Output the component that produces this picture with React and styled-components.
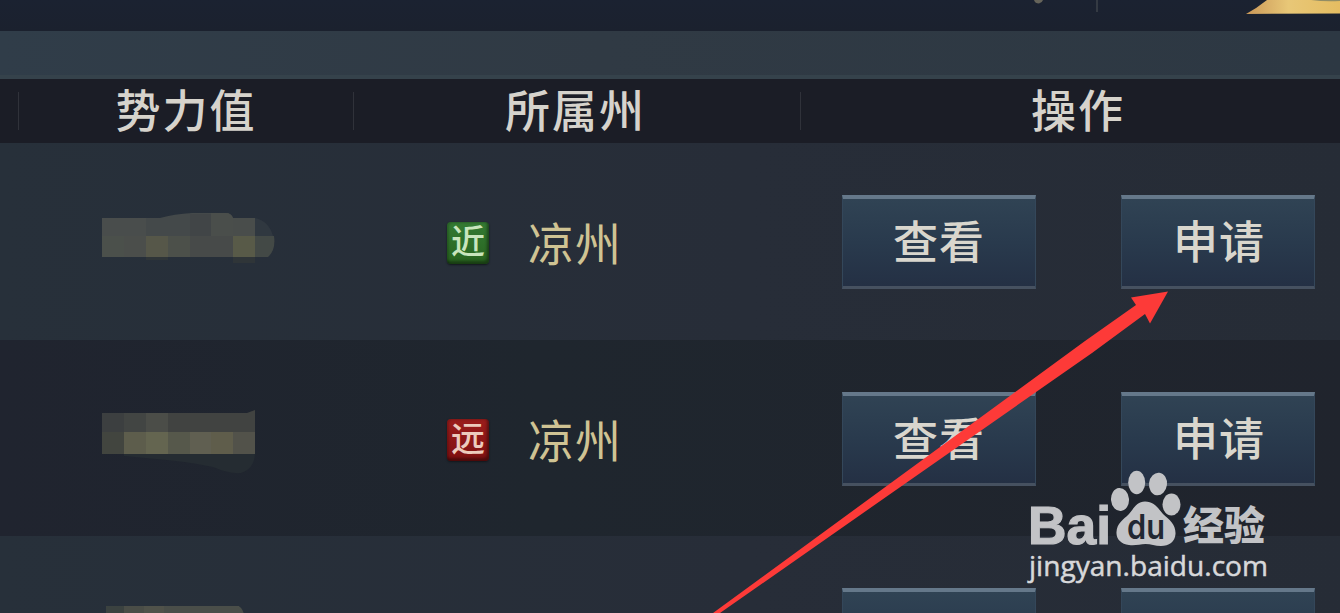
import React from 'react';
import styled, { createGlobalStyle } from 'styled-components';

const rows = [
  { near: true, province: '凉州', mosaic: 'first' },
  { near: false, province: '凉州', mosaic: 'second' },
  { near: false, province: '凉州', mosaic: 'third' },
];

// x, y, width, height, colour
const mosaics = {
  first: [
    [0, 5, 44, 18, '#494d4c'], [0, 23, 22, 21, '#4b504b'], [22, 23, 22, 21, '#4b4e4b'],
    [44, 23, 22, 21, '#565749'], [66, 23, 22, 21, '#4c504a'], [88, 23, 43, 21, '#474a49'],
    [131, 5, 22, 18, '#494d4b'], [131, 23, 22, 21, '#585a48'], [131, 44, 22, 6, '#2f3538'],
    [44, 44, 22, 3, '#2f3538'],
  ],
  second: [
    [0, 2, 22, 19, '#3c3f40'], [22, 2, 22, 19, '#424543'], [44, 2, 22, 19, '#4b4d48'],
    [66, 2, 87, 19, '#414341'], [0, 21, 22, 22, '#42453f'], [22, 21, 22, 22, '#5d5d4c'],
    [44, 21, 22, 22, '#646550'], [66, 21, 22, 22, '#56584b'], [88, 21, 21, 22, '#605f51'],
    [109, 21, 22, 22, '#5f5d4b'], [131, 21, 22, 22, '#52524a'],
  ],
  third: [
    [4, 0, 18, 30, '#3b4240'], [22, 0, 20, 30, '#4a4d47'], [42, 0, 20, 30, '#50524a'],
    [62, 0, 75, 30, '#4a4e49'],
  ],
};

function Mosaic({ kind }) {
  return (
    <MosaicArt viewBox="0 0 175 66">
      {kind === 'first' && (
        <>
          <path d="M44 24V5h14Q72 1 90 0h34q5 0 7 5v18z" fill="#44494a" />
          <path d="M88 1h21v22H88z" fill="#414547" />
          <path d="M109 0h15q5 0 7 5v18h-22z" fill="#4a4e4b" />
          <path d="M153 5q14 3 18 18h-18z" fill="#303840" />
          <path d="M153 23h19q2 14-6 21h-13z" fill="#434946" />
        </>
      )}
      {kind === 'second' && (
        <>
          <path d="M22 43h131q-1 15-14 19-12 1-28-6-28-6-68-9l-21-2z" fill="#252c32" />
          <path d="M145 2l8-3v4z" fill="#414341" />
        </>
      )}
      {kind === 'third' && <path d="M136 0q4 1 6 8h-6z" fill="#4a4e49" />}
      {mosaics[kind].map(([x, y, w, h, fill]) => (
        <rect key={`${x}-${y}`} x={x} y={y} width={w} height={h} fill={fill} />
      ))}
    </MosaicArt>
  );
}

function Row({ near, province, mosaic, dark }) {
  return (
    <TableRow $dark={dark}>
      <PowerCell $kind={mosaic}>
        <Mosaic kind={mosaic} />
      </PowerCell>
      <ProvinceCell>
        <Badge $near={near}>{near ? '近' : '远'}</Badge>
        <Province>{province}</Province>
      </ProvinceCell>
      <ActionCell>
        <Button>查看</Button>
        <Button $nudge>申请</Button>
      </ActionCell>
    </TableRow>
  );
}

function App() {
  return (
    <Screen>
      <GlobalStyle />
      <TopBar>
        <TopArt viewBox="0 0 340 31">
          <defs>
            <linearGradient id="gold" x1="0" x2="1">
              <stop offset="0" stopColor="#c99758" />
              <stop offset="0.45" stopColor="#e8c777" />
              <stop offset="1" stopColor="#e5bd62" />
            </linearGradient>
          </defs>
          <path d="M34 0h9q-1 3-4 3.500-4 0-5-3.500z" fill="#66645a" />
          <path d="M96 0h2v12h-2z" fill="#343a43" />
          <path d="M246 14Q257 8 267 0h73v13.500z" fill="url(#gold)" />
          <path d="M311 0h29v1q-15 1-29-1z" fill="#928d65" />
        </TopArt>
      </TopBar>
      <Strip />
      <HeaderRow>
        <HeaderCell />
        <HeaderCell $line><Title>势力值</Title></HeaderCell>
        <HeaderCell $line><Title $nudge="3px">所属州</Title></HeaderCell>
        <HeaderCell $line><Title>操作</Title></HeaderCell>
      </HeaderRow>
      {rows.map((row, i) => (
        <Row key={row.mosaic} {...row} dark={i % 2 === 1} />
      ))}
      <Arrow viewBox="0 0 1340 613">
        <polygon
          points="1168,291.500 1131,297.500 1136,305 1085,341 713,613 720,613 1092,353 1145,314 1150,323.500"
          fill="#fd3a38"
        />
      </Arrow>
      <Watermark viewBox="0 0 250 120">
        <g fill="#c2c3c6">
          <text x="4" y="79" textLength="83" lengthAdjust="spacingAndGlyphs" className="latin">Bai</text>
          <ellipse cx="96" cy="34.500" rx="9" ry="11.500" transform="rotate(-5 96 34.500)" />
          <ellipse cx="112.700" cy="17.500" rx="8.500" ry="11.700" />
          <ellipse cx="134" cy="19" rx="9" ry="11.300" transform="rotate(7 134 19)" />
          <ellipse cx="147.500" cy="39.500" rx="9" ry="11" />
          <path d="M121 36.500C130 36.500 134 43 139 49C146 55 152 60 151.500 69C151 77 145 81 137 81C131 81 127 79 121.500 79C116 79 111 81 105 80C97 79 92 74 92.500 67C93 58 99 55 105 49C110 43 113 36.500 121 36.500Z" />
          <text x="159" y="75" textLength="82" lengthAdjust="spacingAndGlyphs" className="hans">经验</text>
        </g>
        <text x="103" y="74" textLength="38" lengthAdjust="spacingAndGlyphs" className="du">du</text>
        <text x="5" y="111" textLength="239" lengthAdjust="spacingAndGlyphs" className="site">jingyan.baidu.com</text>
      </Watermark>
    </Screen>
  );
}

export default App;

const GlobalStyle = createGlobalStyle`
    * {
        box-sizing: border-box;
    }
    body {
        margin: 0;
        overflow: hidden;
        background: #20252e;
        font-family: 'Noto Sans CJK SC', sans-serif;
    }
`

const Screen = styled.main`
    position: relative;
    width: 1340px;
    height: 613px;
    overflow: hidden;
`

const TopBar = styled.div`
    display: flex;
    justify-content: flex-end;
    height: 31px;
    background: linear-gradient(#1b2231, #1b212e);
`

const TopArt = styled.svg`
    width: 340px;
    height: 31px;
`

const Strip = styled.div`
    height: 48px;
    background: linear-gradient(90deg, #303d49, #303a44 45%, #2d3843);
    border-bottom: 4px solid #35424b;
`

const Grid = styled.div`
    display: grid;
    grid-template-columns: 18px 335px 447px 555px;
    width: 1355px;
`

const HeaderRow = styled(Grid)`
    height: 64px;
    background: #1b1d26;
`

const HeaderCell = styled.div`
    display: flex;
    align-items: flex-start;
    justify-content: center;
    height: 38px;
    margin-top: 13px;
    border-left: ${props => props.$line ? '1px solid #30323a' : 'none'};
`

const Title = styled.span`
    margin-top: -2px;
    padding-right: ${props => props.$nudge || '0'};
    color: #d6d3cc;
    font-size: 45px;
    font-weight: 500;
    line-height: 38px;
    letter-spacing: 2px;
    white-space: nowrap;
`

const TableRow = styled(Grid)`
    height: ${props => props.$dark ? '196px' : '197px'};
    background: ${props => props.$dark
      ? 'linear-gradient(90deg, #20242f, #1f262e 40%, #20242d)'
      : 'linear-gradient(90deg, #27303a, #272d38 55%, #262c36)'};
`

const PowerCell = styled.div`
    grid-column: 2;
    padding-top: ${props => props.$kind === 'second' ? '71px' : '70px'};
    padding-left: 84px;
`

const MosaicArt = styled.svg`
    display: block;
    width: 175px;
    height: 66px;
    overflow: visible;
`

const ProvinceCell = styled.div`
    display: flex;
    align-items: flex-start;
    gap: 39px;
    padding-top: 79px;
    padding-left: 94px;
`

const Badge = styled.span`
    width: 42px;
    height: 42px;
    border-radius: 4px;
    background: ${props => props.$near
      ? 'linear-gradient(#347a33, #28641f)'
      : 'linear-gradient(#9b1d1c, #7e1011)'};
    box-shadow: inset -2px -3px 3px rgba(0, 0, 0, 0.4), inset 2px 1px 2px rgba(0, 0, 0, 0.2), 0 1px 2px #12171c;
    color: ${props => props.$near ? '#c9e5bd' : '#eccbbd'};
    font-size: 34px;
    font-weight: 500;
    line-height: 36px;
    text-align: center;
`

const Province = styled.span`
    margin-top: -6px;
    color: #cfc393;
    font-size: 46px;
    line-height: 50px;
    letter-spacing: 1px;
`

const ActionCell = styled.div`
    display: flex;
    align-items: flex-start;
    gap: 85px;
    padding-top: 52px;
    padding-left: 42px;
`

const Button = styled.button`
    width: 194px;
    height: 94px;
    padding: 0 0 5px ${props => props.$nudge ? '2px' : '0'};
    border: 1px solid #34475a;
    border-top: 4px solid #65788a;
    border-bottom: 3px solid #465160;
    background: linear-gradient(#304354, #293a4d 50%, #243044);
    color: #d9d6cd;
    font-family: inherit;
    font-size: 45px;
    font-weight: 500;
    line-height: 80px;
    letter-spacing: 1px;
`

const Arrow = styled.svg`
    position: absolute;
    top: 0;
    left: 0;
    width: 1340px;
    height: 613px;
    pointer-events: none;
`

const Watermark = styled.svg`
    position: absolute;
    top: 465px;
    left: 1024px;
    width: 250px;
    height: 120px;
    .latin {
        font: bold 54px 'Liberation Sans', sans-serif;
        stroke: #c2c3c6;
        stroke-width: 1.2px;
    }
    .hans {
        font: 900 40px 'Noto Sans CJK SC', sans-serif;
    }
    .du {
        fill: #222832;
        font: 600 34px Inter, sans-serif;
    }
    .site {
        fill: #d7d8da;
        stroke: #d7d8da;
        stroke-width: 0.5px;
        font: 28px 'Open Sans', sans-serif;
    }
`
